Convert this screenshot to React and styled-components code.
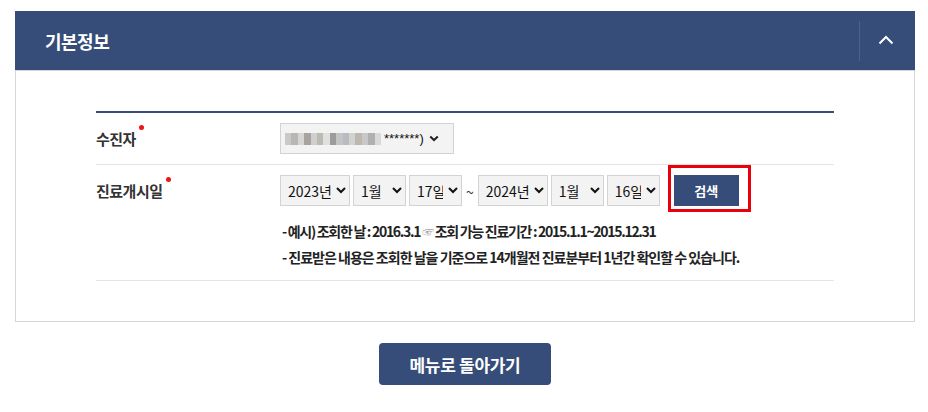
import styled, { createGlobalStyle } from 'styled-components';

const GlobalStyle = createGlobalStyle`
    body {
        margin: 0;
        background: #fff;
        font-family: "Noto Sans CJK KR", "Noto Sans", sans-serif;
        color: #333;
    }
`;

const years = ['2022년', '2023년', '2024년'];
const months = Array.from({ length: 12 }, (_, i) => `${i + 1}월`);
const days = Array.from({ length: 31 }, (_, i) => `${i + 1}일`);
const mosaic = ['#c9c9c9', '#b9b6b4', '#d6d6d6', '#a8a39f', '#cfcfcf', '#bdb9b3', '#e0e0e0', '#9c9c9c', '#c4c4c4', '#b8bcc0', '#d2d2d2', '#bcb8b0', '#c8c8c8', '#aeb0b2', '#d9d9d9'];

function Chevron() {
    return (
        <svg width="10" height="7" viewBox="0 0 10 7">
            <path d="M1.2 1.4 L5 5 L8.8 1.4" fill="none" stroke="#222" strokeWidth="2" />
        </svg>
    );
}

function DateSelect({ value, options, width }) {
    return (
        <Select width={width} defaultValue={value}>
            {options.map((o) => <option key={o}>{o}</option>)}
        </Select>
    );
}

export default function App() {
    return (
        <>
            <GlobalStyle />
            <Page>
                <Panel>
                    <PanelHeader>
                        <Title>기본정보</Title>
                        <Toggle>
                            <svg width="16" height="10" viewBox="0 0 16 10">
                                <path d="M1.5 8.5 L8 2 L14.5 8.5" fill="none" stroke="#fff" strokeWidth="2" />
                            </svg>
                        </Toggle>
                    </PanelHeader>
                    <PanelBody>
                        <Table>
                            <Row>
                                <Label dot={43}>수진자</Label>
                                <Field>
                                    <FakeSelect>
                                        <Mosaic>
                                            {mosaic.map((c, i) => <Cell key={i} style={{ background: c }} />)}
                                        </Mosaic>
                                        <Masked>*******)</Masked>
                                        <Chevron />
                                    </FakeSelect>
                                </Field>
                            </Row>
                            <Row>
                                <Label dot={70}>진료개시일</Label>
                                <Field>
                                    <DateLine>
                                        <DateSelect value="2023년" options={years} width={70} />
                                        <DateSelect value="1월" options={months} width={53} />
                                        <DateSelect value="17일" options={days} width={53} />
                                        <Tilde>~</Tilde>
                                        <DateSelect value="2024년" options={years} width={70} />
                                        <DateSelect value="1월" options={months} width={53} />
                                        <DateSelect value="16일" options={days} width={53} />
                                        <Highlight>
                                            <SearchButton>검색</SearchButton>
                                        </Highlight>
                                    </DateLine>
                                    <Notes>
                                        <Note tight>-&nbsp;예시) 조회한 날 : 2016.3.1 <Hand>☞</Hand> 조회 가능 진료기간 : 2015.1.1~2015.12.31</Note>
                                        <Note>-&nbsp;진료받은 내용은 조회한 날을 기준으로 14개월전 진료분부터 1년간 확인할 수 있습니다.</Note>
                                    </Notes>
                                </Field>
                            </Row>
                        </Table>
                    </PanelBody>
                </Panel>
                <Footer>
                    <BackButton>메뉴로 돌아가기</BackButton>
                </Footer>
            </Page>
        </>
    );
}

const Page = styled.div`
    padding: 11px 13px 0 15px;
    width: 900px;
`;

const Panel = styled.section`
    border: 1px solid #d6d6d6;
    border-top: none;
`;

const PanelHeader = styled.div`
    height: 59px;
    margin: 0 -1px;
    background: #354d78;
    display: flex;
    align-items: center;
    justify-content: space-between;
    border-bottom: 1px solid #d6d6d6;
`;

const Title = styled.h2`
    margin: 0 0 0 30px;
    font-size: 18px;
    font-weight: 700;
    color: #fff;
    letter-spacing: -0.5px;
`;

const Toggle = styled.button`
    width: 56px;
    height: 40px;
    border: none;
    border-left: 1px solid #4a6189;
    background: transparent;
    display: flex;
    align-items: center;
    justify-content: center;
    padding: 0 4px 2px 0;
`;

const PanelBody = styled.div`
    padding: 40px 80px 40px 80px;
`;

const Table = styled.div`
    border-top: 2px solid #354d78;
`;

const Row = styled.div`
    display: flex;
    border-bottom: 1px solid #e4e4e4;
    padding: 10px 0;
`;

const Label = styled.div`
    width: 184px;
    padding-top: 5px;
    font-size: 15px;
    line-height: 22px;
    font-weight: 700;
    color: #333;
    letter-spacing: -0.5px;
    position: relative;
    align-self: flex-start;

    &::after {
        content: '';
        position: absolute;
        top: 2px;
        left: ${(p) => p.dot}px;
        width: 5px;
        height: 5px;
        border-radius: 50%;
        background: #f01414;
    }
`;

const Field = styled.div`
    flex: 1;
`;

const FakeSelect = styled.div`
    width: 174px;
    height: 31px;
    box-sizing: border-box;
    border: 1px solid #d3d3d3;
    background: #f3f3f3;
    display: flex;
    align-items: center;
    padding: 0 5px 0 4px;
    gap: 1px;
`;

const Mosaic = styled.div`
    display: flex;
    height: 12px;
    width: 96px;
    filter: blur(0.6px);
`;

const Cell = styled.span`
    flex: 1;
`;

const Masked = styled.span`
    font-family: "Liberation Sans", sans-serif;
    font-size: 13px;
    color: #111;
    margin: 0 4px 0 2px;
`;

const DateLine = styled.div`
    display: flex;
    align-items: flex-start;
    gap: 3px;
    height: 31px;
`;

const Select = styled.select`
    width: ${(p) => p.width}px;
    height: 31px;
    border: 1px solid #d3d3d3;
    background: #f3f3f3;
    font-family: "Noto Sans CJK KR", sans-serif;
    font-size: 14px;
    color: #111;
    padding: 0 2px 0 3px;
    border-radius: 0;
`;

const Tilde = styled.span`
    font-size: 14px;
    line-height: 31px;
    margin: 2px 1px 0;
`;

const Highlight = styled.div`
    margin: -10px 0 -6px 5px;
    border: 3px solid #e8000b;
    padding: 7px 9px 3px 3px;
`;

const SearchButton = styled.button`
    width: 65px;
    height: 31px;
    border: none;
    background: #354d78;
    color: #fff;
    font-family: "Noto Sans CJK KR", sans-serif;
    font-size: 13px;
    font-weight: 700;
    display: block;
`;

const Notes = styled.ul`
    list-style: none;
    margin: 12px 0 0 2px;
    padding: 0;
    font-size: 14px;
    font-weight: 700;
    color: #222;
`;

const Note = styled.li`
    height: 26px;
    line-height: 26px;
    overflow: hidden;
    white-space: nowrap;
    letter-spacing: ${(p) => (p.tight ? '-1.3px' : '-1px')};
`;

const Hand = styled.span`
    color: #999;
    font-weight: 400;
    font-size: 12px;
    line-height: 1;
`;

const Footer = styled.div`
    display: flex;
    justify-content: center;
    padding-top: 21px;
`;

const BackButton = styled.button`
    width: 172px;
    height: 42px;
    border: none;
    border-radius: 4px;
    background: #354d78;
    color: #fff;
    font-family: "Noto Sans CJK KR", sans-serif;
    font-size: 17px;
    font-weight: 700;
    letter-spacing: -0.3px;
`;
